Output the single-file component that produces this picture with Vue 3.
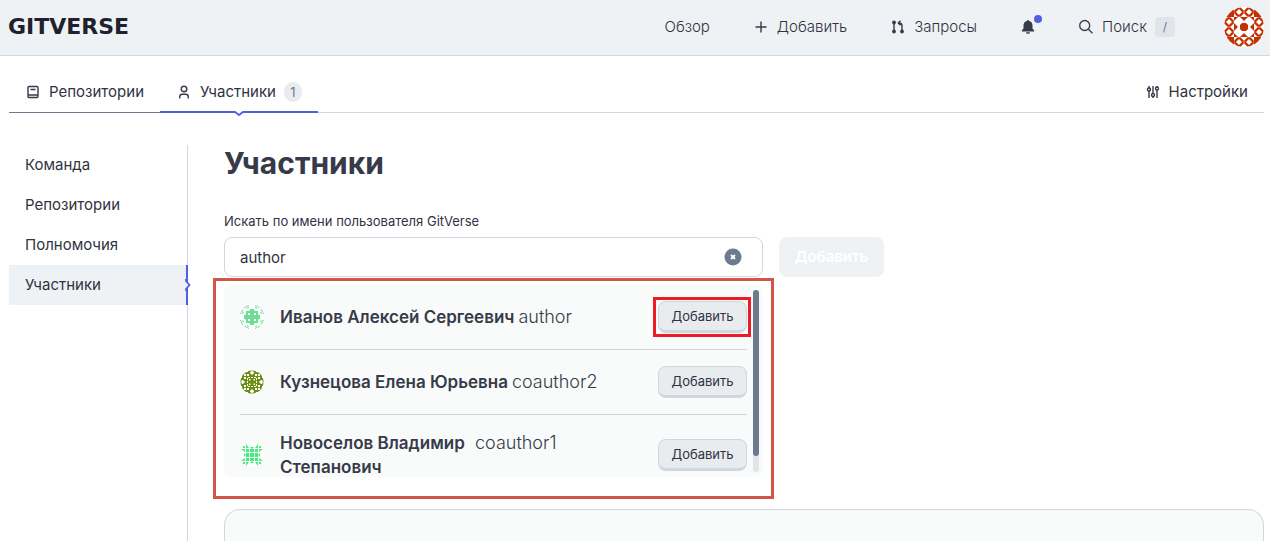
<script setup>
import { ref } from 'vue'

const query = ref('author')
const sections = ['Команда', 'Репозитории', 'Полномочия', 'Участники']
const people = [
  { name: 'Иванов Алексей Сергеевич', login: 'author', icon: 'mint', marked: true },
  { name: 'Кузнецова Елена Юрьевна', login: 'coauthor2', icon: 'olive' },
  { name: 'Новоселов Владимир Степанович', login: 'coauthor1', icon: 'green', narrow: true },
]
const ringCells = [
  [10, 0], [20, 0], [0, 10], [30, 10], [0, 20], [30, 20], [10, 30], [20, 30],
]
const innerCells = [[10, 10], [20, 10], [10, 20], [20, 20]]
const quarters = [0, 90, 180, 270]
</script>

<template>
  <div class="page">
    <header class="topbar">
      <a href="#" class="logo">GITVERSE</a>
      <nav class="topnav">
        <a href="#">Обзор</a>
        <button type="button" class="plain">
          <svg width="16" height="16" viewBox="0 0 16 16"><path d="M8 2.500v11M2.500 8h11" stroke="#373a49" stroke-width="1.4" /></svg>
          Добавить
        </button>
        <a href="#">
          <svg width="16" height="16" viewBox="0 0 16 16" fill="none" stroke="#373a49" stroke-width="1.4">
            <path d="M4 4v8M12 12V6.500Q12 4 8.500 4M10.500 1.800L8.300 4l2.200 2.200" />
            <g fill="#373a49"><circle cx="4" cy="3.500" r="1.200" /><circle cx="4" cy="12.500" r="1.200" /><circle cx="12" cy="12.500" r="1.200" /></g>
          </svg>
          Запросы
        </a>
        <button type="button" class="plain bell" aria-label="Уведомления">
          <svg width="16" height="16" viewBox="0 0 16 16" fill="#373a49"><path d="M8 1a1 1 0 0 1 1 1c2.300.5 3.500 2.200 3.500 4.500v3l1.700 2V12.500H1.800v-1l1.700-2v-3C3.500 4.200 4.700 2.500 7 2a1 1 0 0 1 1-1zM6 13.300h4a2 1.500 0 0 1-4 0z" /></svg>
          <span class="dot"></span>
        </button>
        <button type="button" class="plain search">
          <svg width="16" height="16" viewBox="0 0 16 16" fill="none" stroke="#373a49" stroke-width="1.300"><circle cx="6.700" cy="6.500" r="5" /><path d="M10.300 10.200L14.500 14.200" /></svg>
          Поиск <kbd>/</kbd>
        </button>
        <a href="#" class="me" aria-label="Профиль">
          <svg width="40" height="40" viewBox="0 0 40 40">
            <defs><clipPath id="me-clip"><circle cx="20" cy="20" r="20" /></clipPath></defs>
            <g clip-path="url(#me-clip)">
              <rect width="40" height="40" fill="#fff" />
              <g v-for="c in ringCells" :key="c.join()" :transform="`translate(${c[0]} ${c[1]})`">
                <path d="M3.500 .3h3L9.700 3.500v3L6.500 9.700h-3L.3 6.500v-3z" fill="#c33100" />
                <path d="M5 2L8 5 5 8 2 5z" fill="#fff" />
              </g>
              <g v-for="c in innerCells" :key="c.join()" :transform="`translate(${c[0]} ${c[1]})`">
                <rect width="10" height="10" fill="#c33100" />
                <path d="M4 0h2L10 4v2L6 10H4L0 6V4z" fill="#fff" />
              </g>
              <path d="M18 16h4l2 2v4l-2 2h-4l-2-2v-4z" fill="#c33100" />
              <g v-for="q in quarters" :key="q" :transform="`rotate(${q} 20 20)`" fill="#c33100">
                <path d="M0 10L10 0v10z" />
              </g>
            </g>
          </svg>
        </a>
      </nav>
    </header>

    <nav class="tabs">
      <a href="#" class="tab visited">
        <svg width="16" height="16" viewBox="0 0 16 16" fill="none" stroke="#373a49" stroke-width="1.400"><rect x="3" y="2.500" width="10" height="11" rx="1" /><path d="M3 11h10M5.500 5.500h5" /></svg>
        Репозитории
      </a>
      <a href="#" class="tab current">
        <svg width="16" height="16" viewBox="0 0 16 16" fill="none" stroke="#373a49" stroke-width="1.400"><circle cx="8" cy="5" r="2.800" /><path d="M3.700 14.500v-1.500q0-2.700 2.700-2.700h3.200q2.700 0 2.700 2.700v1.500" /></svg>
        Участники <span class="count">1</span>
        <svg class="notch" width="12" height="5" viewBox="0 0 12 5"><path d="M1 0h10v1L6 4 1 1z" fill="#fff" /><path d="M0 1h2l4 3 4-3h2" fill="none" stroke="#4f5fe0" stroke-width="1.800" /></svg>
      </a>
      <a href="#" class="tab settings">
        <svg width="16" height="16" viewBox="0 0 16 16" fill="none" stroke="#373a49" stroke-width="1.400"><path d="M4 2v2M4 7v7M8 2v7M8 13v1M12 2v1M12 6v8" /><circle cx="4" cy="5.500" r="1.500" /><circle cx="8" cy="11" r="1.500" /><circle cx="12" cy="4.500" r="1.500" /></svg>
        Настройки
      </a>
    </nav>

    <div class="body">
      <nav class="side">
        <a v-for="s in sections" :key="s" href="#" :class="{ active: s === 'Участники' }">
          {{ s }}
          <svg v-if="s === 'Участники'" class="mark" width="6" height="12" viewBox="0 0 6 12"><path d="M0 1v10h1L4.500 6 1 1z" fill="#eff2f5" /><path d="M1 0v2l3.500 4L1 10v2" fill="none" stroke="#4f5fe0" stroke-width="1.800" /></svg>
        </a>
      </nav>

      <main>
        <h1>Участники</h1>
        <label for="user">Искать по имени пользователя GitVerse</label>
        <div class="row">
          <div class="field">
            <input id="user" v-model="query" type="text" autocomplete="off" />
            <button type="button" class="clear" aria-label="Очистить" @click="query = ''">
              <svg width="18" height="18" viewBox="0 0 18 18"><circle cx="9" cy="9" r="8.500" fill="#6b7a8d" /><path d="M7 7l4 4M11 7l-4 4" stroke="#fff" stroke-width="1.800" /></svg>
            </button>
          </div>
          <button type="button" class="submit" disabled>Добавить</button>
        </div>

        <div class="results">
          <ul class="panel">
            <li v-for="p in people" :key="p.login">
              <svg v-if="p.icon === 'mint'" class="ava" viewBox="-12 -12 24 24">
                <circle r="12" fill="#fff" />
                <path d="M-2-8h4v1l1 1h3v3l1 1h1v4h-1l-1 1v3h-3l-1 1v1h-4v-1l-1-1h-3v-3l-1-1h-1v-4h1l1-1v-3h3l1-1z" fill="#70dc97" />
                <g fill="#fff"><rect x="-4" y="-4" width="2" height="2" /><rect x="2" y="-4" width="2" height="2" /><rect x="-4" y="2" width="2" height="2" /><rect x="2" y="2" width="2" height="2" /></g>
                <g v-for="q in quarters" :key="q" :transform="`rotate(${q})`" stroke="#70dc97" fill="none"><path d="M-11.500-3L-9-7.500M-8-9L-3-11.500M-9.500-3L-8.500-5M-5-8.500l2-1" stroke-width="1" /></g>
              </svg>
              <svg v-else-if="p.icon === 'olive'" class="ava" viewBox="-12 -12 24 24">
                <circle r="12" fill="#fff" />
                <circle r="11.500" fill="#6b8e13" />
                <g v-for="q in quarters" :key="q" :transform="`rotate(${q})`" fill="#fff">
                  <path d="M-2-10l2-1 2 1v1L0-7l-2-2zM-6-12h2v2h-2zM4-12h2v2h-2zM-8-8h2v2h-2zM-5-8h2v2h-2zM3-8h2v2h-2zM-4-5h2v1h-2zM2-5h2v1h-2zM-1-5h2v1h-2zM-3-3h1.500v1.500h-1.500z" />
                </g>
              </svg>
              <svg v-else class="ava" viewBox="-12 -12 24 24">
                <circle r="12" fill="#fff" />
                <rect x="-6" y="-6" width="12" height="12" fill="#4be783" />
                <path d="M-6-2.500H6M-6 2.500H6M-2.500-6V6M2.500-6V6" stroke="#fff" stroke-width=".8" />
                <g v-for="q in quarters" :key="q" :transform="`rotate(${q})`" fill="#4be783">
                  <path d="M-6-11l3 4h-3zM6-11l-3 4h3zM-9-9h2v2h-2zM-2-8h4l-2 2z" />
                </g>
              </svg>
              <div class="who" :class="{ narrow: p.narrow }">
                <strong>{{ p.name }}</strong>
                <span>{{ p.login }}</span>
              </div>
              <div class="act" :class="{ marked: p.marked }">
                <button type="button" class="add">Добавить</button>
              </div>
            </li>
          </ul>
          <div class="track"><div class="thumb"></div></div>
          <div class="frame"></div>
        </div>

        <section class="card"></section>
      </main>
    </div>
  </div>
</template>

<style>
body {
  margin: 0;
  background: #fff;
}
</style>

<style scoped>
* {
  box-sizing: border-box;
}
.page {
  display: flex;
  flex-direction: column;
  height: 100vh;
  overflow: hidden;
  font: 400 15px/20px Inter, "Noto Sans", sans-serif;
  color: #30333f;
}
a {
  color: inherit;
  text-decoration: none;
}
button,
input {
  font: inherit;
  color: inherit;
}
.topbar {
  display: flex;
  justify-content: space-between;
  align-items: center;
  height: 56px;
  padding: 0 6px 2px 8px;
  background: #eff2f5;
  border-bottom: 1px solid #d0d7de;
  flex: none;
}
.logo {
  font: 700 22px/24px "DejaVu Sans", sans-serif;
  color: #1f222c;
}
.topnav {
  display: flex;
  align-items: center;
  font-size: 15px;
  font-weight: 300;
}
.topnav > * {
  display: flex;
  align-items: center;
  gap: 8px;
  margin-right: 43px;
}
.topnav > .me {
  margin-right: 0;
}
.plain {
  padding: 0;
  border: 0;
  background: none;
}
.bell {
  position: relative;
}
.topnav > .bell {
  margin-right: 42px;
}
.dot {
  position: absolute;
  right: -6px;
  top: -4px;
  width: 8px;
  height: 8px;
  border-radius: 50%;
  background: #4f5fe0;
}
.topnav > .search {
  margin-right: 49px;
}
kbd {
  width: 20px;
  height: 20px;
  border-radius: 4px;
  background: #e0e5ec;
  color: #6b7a8d;
  font: 400 12px/20px Inter, sans-serif;
  text-align: center;
}
.me svg {
  display: block;
}
.tabs {
  display: flex;
  height: 57px;
  margin: 0 6px 0 9px;
  padding-top: 15px;
  box-shadow: inset 0 -1px #d0d7de;
  flex: none;
}
.tab {
  position: relative;
  display: flex;
  align-items: center;
  gap: 8px;
  padding: 0 16px;
}
.visited {
  box-shadow: inset 0 -1px #6b7a8d;
}
.current {
  box-shadow: inset 0 -2px #4f5fe0;
}
.notch {
  position: absolute;
  left: 50%;
  margin-left: -6px;
  bottom: -3px;
}
.count {
  width: 18px;
  height: 20px;
  border-radius: 9px;
  background: #e8ecef;
  color: #6b7a8d;
  font-size: 13px;
  text-align: center;
}
.settings {
  margin-left: auto;
}
.body {
  display: flex;
  flex: 1;
  min-height: 0;
  padding: 32px 6px 0 9px;
}
.side {
  width: 179px;
  flex: none;
  border-right: 1px solid #d0d7de;
}
.side a {
  display: block;
  position: relative;
  padding: 10px 16px;
}
.side .active {
  margin-right: -1px;
  background: #eff2f5;
  border-right: 2px solid #4f5fe0;
}
.mark {
  position: absolute;
  right: -5px;
  top: 14px;
}
main {
  display: flex;
  flex-direction: column;
  flex: 1;
  min-width: 0;
  padding-left: 36px;
}
h1 {
  margin: 0 0 30px;
  font-size: 30px;
  line-height: 36px;
  font-weight: 700;
  color: #373a49;
}
label {
  margin-bottom: 6px;
  font-size: 13px;
}
.row {
  display: flex;
  gap: 16px;
}
.field {
  position: relative;
  width: 539px;
}
.field input {
  display: block;
  width: 100%;
  height: 40px;
  padding: 0 40px 0 15px;
  border: 1px solid #d0d7de;
  border-radius: 8px;
  background: #fff;
  outline: 0;
}
.clear {
  position: absolute;
  right: 21px;
  top: 11px;
  padding: 0;
  border: 0;
  background: none;
}
.clear svg {
  display: block;
}
.submit {
  width: 105px;
  height: 40px;
  padding: 0;
  border: 0;
  border-radius: 8px;
  background: #eff2f5;
  color: #fff;
  font-weight: 600;
}
.results {
  position: relative;
  width: 539px;
  margin: 8px 0 32px;
}
.panel {
  height: 192px;
  margin: 0;
  padding: 0 16px;
  overflow: hidden;
  list-style: none;
  background: #f9fbfa;
  border-radius: 8px;
}
li {
  display: flex;
  align-items: center;
  min-height: 65px;
  padding: 16px 0;
  border-bottom: 1px solid #d0d7de;
}
.ava {
  width: 24px;
  height: 24px;
  margin-right: 16px;
  flex: none;
}
.who {
  display: flex;
  align-items: baseline;
  gap: 4px;
  flex: 1;
  font-size: 18px;
  line-height: 24px;
  color: #373a49;
}
.who strong {
  font-size: 17px;
  font-weight: 600;
}
.who span {
  font-weight: 300;
}
.narrow strong {
  width: 191px;
}
.act {
  position: relative;
}
.marked::after {
  content: "";
  position: absolute;
  inset: -4px -4px -4px -5px;
  border: 3px solid #ed1c24;
}
.add {
  display: block;
  width: 89px;
  height: 32px;
  padding: 0;
  border: 1px solid #d0d7de;
  border-bottom-width: 3px;
  border-radius: 8px;
  background: #e8ecef;
  font-size: 13px;
}
.track {
  position: absolute;
  right: 4px;
  top: 5px;
  bottom: 5px;
  width: 6px;
  border-radius: 3px;
  background: #e0e5ec;
}
.thumb {
  height: 91%;
  border-radius: 3px;
  background: #6b7a8d;
}
.frame {
  position: absolute;
  inset: -7px -11px -22px -11px;
  border: 3px solid #d35449;
  pointer-events: none;
}
.card {
  flex: 1;
  border: 1px solid #d0d7de;
  border-bottom: 0;
  border-radius: 16px 16px 0 0;
  background: #f9fbfa;
}
</style>
